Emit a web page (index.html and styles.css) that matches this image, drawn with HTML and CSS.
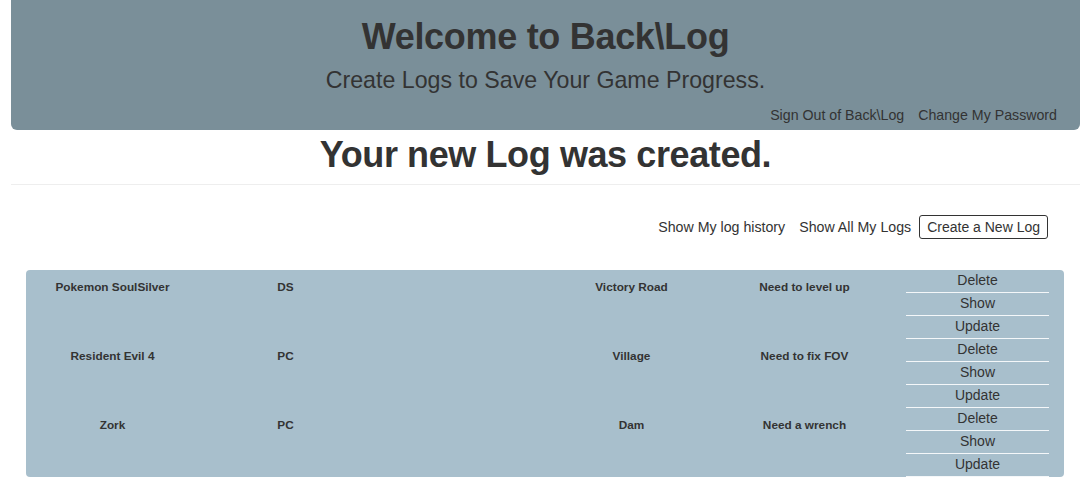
FILE: index.html
```html
<!DOCTYPE html>
<html lang="en">
<head>
<meta charset="utf-8">
<title>Back\Log</title>
<link rel="stylesheet" href="styles.css">
</head>
<body>
<div class="page">
  <header class="hero">
    <h1 class="hero-title">Welcome to Back\Log</h1>
    <p class="hero-sub">Create Logs to Save Your Game Progress.</p>
    <nav class="hero-nav">
      <a href="#">Sign Out of Back\Log</a>
      <a href="#">Change My Password</a>
    </nav>
  </header>

  <h2 class="notice">Your new Log was created.</h2>
  <hr class="divider">

  <div class="actions">
    <a href="#">Show My log history</a>
    <a href="#">Show All My Logs</a>
    <button class="btn-outline" type="button">Create a New Log</button>
  </div>

  <table class="logs">
    <tbody>
      <tr>
        <td>Pokemon SoulSilver</td>
        <td>DS</td>
        <td></td>
        <td>Victory Road</td>
        <td>Need to level up</td>
        <td class="btns">
          <button type="button">Delete</button>
          <button type="button">Show</button>
          <button type="button">Update</button>
        </td>
      </tr>
      <tr>
        <td>Resident Evil 4</td>
        <td>PC</td>
        <td></td>
        <td>Village</td>
        <td>Need to fix FOV</td>
        <td class="btns">
          <button type="button">Delete</button>
          <button type="button">Show</button>
          <button type="button">Update</button>
        </td>
      </tr>
      <tr>
        <td>Zork</td>
        <td>PC</td>
        <td></td>
        <td>Dam</td>
        <td>Need a wrench</td>
        <td class="btns">
          <button type="button">Delete</button>
          <button type="button">Show</button>
          <button type="button">Update</button>
        </td>
      </tr>
    </tbody>
  </table>
</div>
</body>
</html>
```
FILE: styles.css
```css
* { box-sizing: border-box; }

html, body {
  margin: 0;
  padding: 0;
  background: #fff;
}

body {
  font-family: "Liberation Sans", Arial, Helvetica, sans-serif;
  font-size: 14px;
  line-height: 20px;
  color: #333;
}

a { color: #333; text-decoration: none; }

.page {
  padding: 0 11px;
}

.hero {
  background: #7a8f99;
  border-radius: 0 0 6px 6px;
  height: 130px;
  padding: 17px 23px 0 23px;
  text-align: center;
}

.hero-title {
  margin: 0;
  font-size: 36px;
  line-height: 40px;
  font-weight: 700;
  letter-spacing: -0.3px;
}

.hero-sub {
  margin: 9px 0 0 0;
  font-size: 23.2px;
  line-height: 28px;
  font-weight: 400;
}

.hero-nav {
  margin-top: 11px;
  display: flex;
  justify-content: flex-end;
  gap: 14px;
  font-size: 14.2px;
  line-height: 20px;
}

.notice {
  margin: 5px 0 0 0;
  text-align: center;
  font-size: 36px;
  line-height: 40px;
  font-weight: 700;
  letter-spacing: -0.4px;
}

.divider {
  margin: 9px 0 0 0;
  border: 0;
  border-top: 1px solid #eee;
  height: 0;
}

.actions {
  margin-top: 30px;
  padding-right: 32px;
  display: flex;
  justify-content: flex-end;
  align-items: center;
  gap: 14px;
  font-size: 14.2px;
}

.actions .btn-outline {
  margin-left: -6px;
  font-family: inherit;
  font-size: 14px;
  line-height: 20px;
  color: #333;
  background: #fff;
  border: 1px solid #333;
  border-radius: 3px;
  padding: 1px 7px;
  height: 24px;
}

.logs {
  margin: 31px 15px 0 15px;
  width: calc(100% - 31px);
  border-collapse: separate;
  border-spacing: 0;
  background: #a8bfcc;
  border-radius: 4px;
  table-layout: fixed;
  font-size: 11.8px;
  font-weight: 700;
  line-height: 17px;
}

.logs td {
  width: 16.666%;
  padding: 9px 4px 6px 4px;
  vertical-align: top;
  text-align: center;
}

.logs td.btns {
  padding: 0 15px;
}

.logs td.btns button {
  display: block;
  width: 100%;
  height: 23px;
  margin: 0;
  padding: 0 0 1px 0;
  background: transparent;
  border: 0;
  border-bottom: 1px solid #f4f7f9;
  font-family: inherit;
  font-size: 14px;
  font-weight: 400;
  line-height: 21px;
  color: #333;
  text-align: center;
}
```
